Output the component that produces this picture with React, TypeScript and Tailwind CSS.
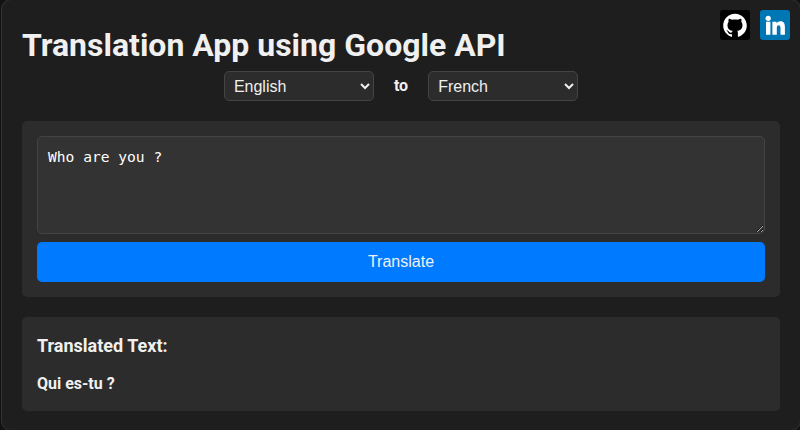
import React, { useState } from "react";

const languages = ["English", "French", "Spanish", "German", "Italian"];

function LanguageSelect({ value, onChange }: { value: string; onChange: (v: string) => void }) {
  return (
    <select
      value={value}
      onChange={(e) => onChange(e.target.value)}
      className="h-[30px] w-[150px] rounded-[5px] border border-[#444] bg-[#2c2c2c] px-[5px] font-['Liberation_Sans',Arial,sans-serif] text-[16px] leading-[18px] text-[#f0f0f0]"
    >
      {languages.map((l) => (
        <option key={l}>{l}</option>
      ))}
    </select>
  );
}

function GithubIcon() {
  return (
    <svg viewBox="0 0 30 30" className="size-[30px]" aria-label="GitHub">
      <rect width="30" height="30" rx="3" fill="#000" />
      <g transform="translate(3.2 3.5) scale(.983 .98)">
        <path
          fill="#fff"
          d="M12 .297c-6.63 0-12 5.373-12 12 0 5.303 3.438 9.8 8.205 11.385.6.113.82-.258.82-.577 0-.285-.01-1.04-.015-2.04-3.338.724-4.042-1.61-4.042-1.61C4.422 18.07 3.633 17.7 3.633 17.7c-1.087-.744.084-.729.084-.729 1.205.084 1.838 1.236 1.838 1.236 1.07 1.835 2.809 1.305 3.495.998.108-.776.417-1.305.76-1.605-2.665-.3-5.466-1.332-5.466-5.93 0-1.31.465-2.38 1.235-3.22-.135-.303-.54-1.523.105-3.176 0 0 1.005-.322 3.3 1.23.96-.267 1.98-.399 3-.405 1.02.006 2.04.138 3 .405 2.28-1.552 3.285-1.23 3.285-1.23.645 1.653.24 2.873.12 3.176.765.84 1.23 1.91 1.23 3.22 0 4.61-2.805 5.625-5.475 5.92.42.36.81 1.096.81 2.22 0 1.606-.015 2.896-.015 3.286 0 .315.21.69.825.57C20.565 22.092 24 17.592 24 12.297c0-6.627-5.373-12-12-12"
        />
      </g>
    </svg>
  );
}

function LinkedinIcon() {
  return (
    <svg viewBox="0 0 30 30" className="size-[30px]" aria-label="LinkedIn">
      <rect width="30" height="30" rx="3" fill="#0077b5" />
      <g fill="#fff">
        <circle cx="8.2" cy="8.3" r="2.6" />
        <path d="M6 11.8h4.4v13H6zM12.4 11.8h4.2v1.6c.8-1.3 2.2-2.1 3.9-2.1 3.4 0 4.4 2.3 4.4 5.9v7.6h-4.4v-6.7c0-1.9-.5-2.9-1.8-2.9-1.4 0-1.9 1.1-1.9 2.9v6.7h-4.4z" />
      </g>
    </svg>
  );
}

export default function App() {
  const [from, setFrom] = useState("English");
  const [to, setTo] = useState("French");
  const [text, setText] = useState("Who are you ?");

  return (
    <div className="h-[430px] overflow-hidden bg-[#121212] pl-px font-[Roboto,sans-serif] text-[#f0f0f0]">
      <main className="relative -mt-px h-[432px] w-[800px] rounded-[10px] border border-[#333] bg-[#1e1e1e] px-5 pt-[26px]">
        <div className="absolute right-[10px] top-[10px] flex gap-[10px]">
          <GithubIcon />
          <LinkedinIcon />
        </div>
        <h1 className="text-[32px] font-bold leading-[38px]">Translation App using Google API</h1>
        <div className="mt-[7px] flex items-center justify-center gap-5">
          <LanguageSelect value={from} onChange={setFrom} />
          <span className="pb-0.5 text-[16px] font-bold leading-[19px]">to</span>
          <LanguageSelect value={to} onChange={setTo} />
        </div>
        <section className="mt-5 h-[176px] rounded-[5px] bg-[#2c2c2c] p-[15px]">
          <textarea
            value={text}
            onChange={(e) => setText(e.target.value)}
            spellCheck={false}
            className="block h-[98px] w-full resize rounded-[5px] border border-[#444] bg-[#333] p-[10px] font-['DejaVu_Sans_Mono',monospace] text-[14.6px] leading-[19px] text-white"
          />
          <button className="mt-2 block h-10 w-full rounded-[5px] bg-[#007bff] font-['Liberation_Sans',Arial,sans-serif] text-[16px] leading-[18px] text-[#f0f0f0]">
            Translate
          </button>
        </section>
        <section className="mt-5 h-[94px] rounded-[5px] bg-[#2c2c2c] px-[15px] pt-[18px]">
          <h3 className="text-[18px] font-bold leading-[21px]">Translated Text:</h3>
          <p className="mt-[18px] text-[16px] font-bold leading-[19px]">Qui es-tu ?</p>
        </section>
      </main>
    </div>
  );
}
